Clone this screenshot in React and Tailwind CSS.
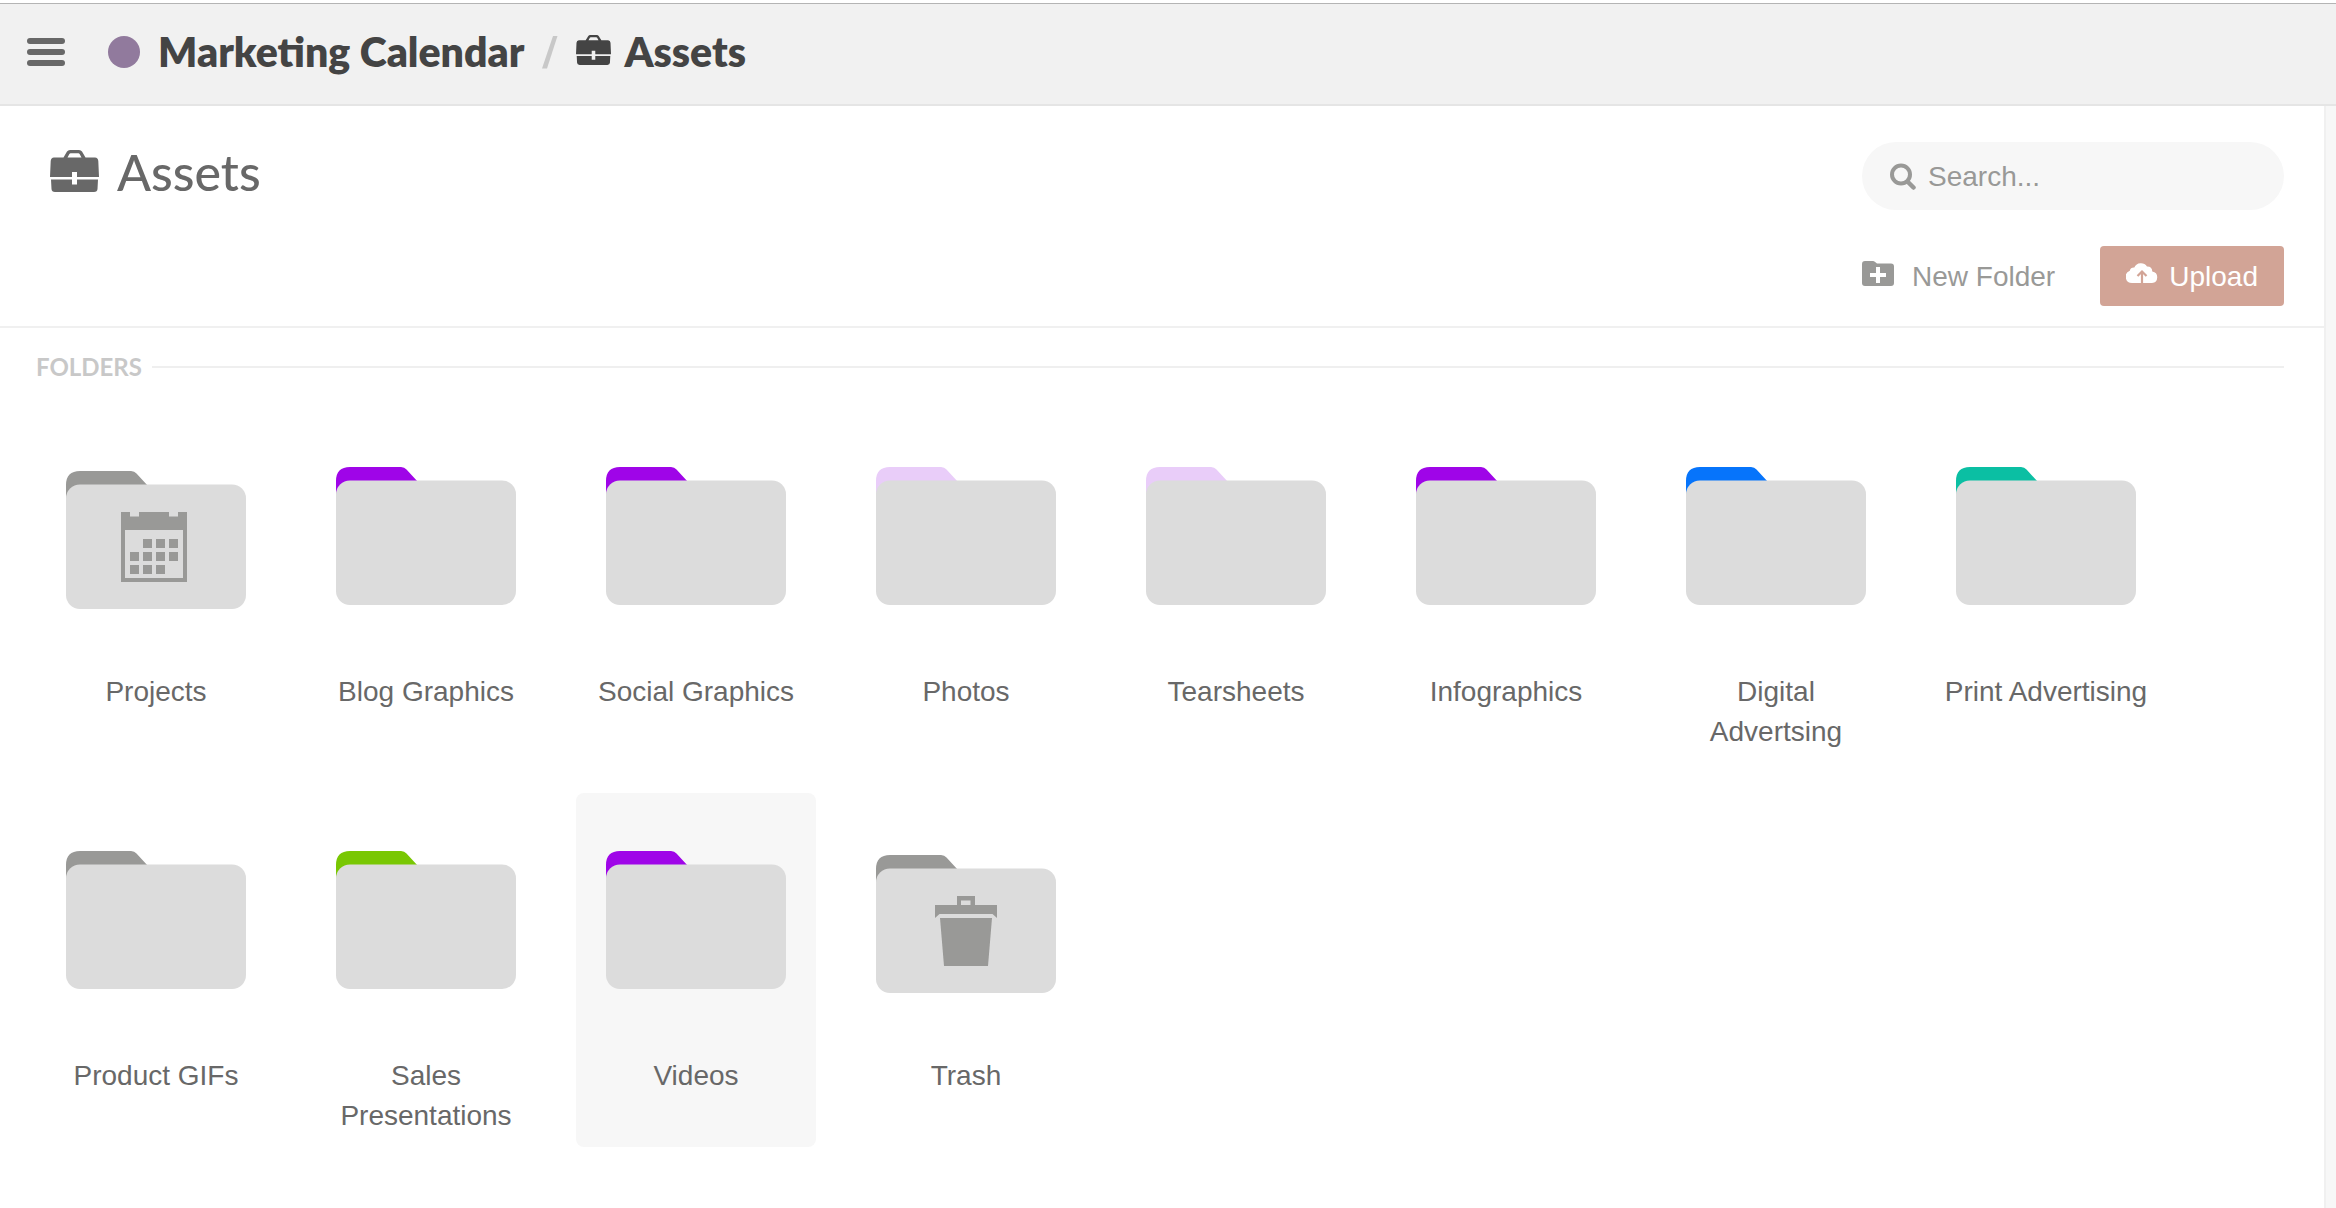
const GREY = "#999997";

const folders = [
  { name: "Projects", color: GREY, glyph: "calendar" },
  { name: "Blog Graphics", color: "#9f05e8" },
  { name: "Social Graphics", color: "#9f05e8" },
  { name: "Photos", color: "#e9cdf9" },
  { name: "Tearsheets", color: "#e9cdf9" },
  { name: "Infographics", color: "#9f05e8" },
  { name: "Digital Advertsing", color: "#0674fb" },
  { name: "Print Advertising", color: "#0bbfa3" },
  { name: "Product GIFs", color: GREY },
  { name: "Sales Presentations", color: "#79c703" },
  { name: "Videos", color: "#9f05e8", active: true },
  { name: "Trash", color: GREY, glyph: "trash" },
];

function Briefcase({ className }) {
  return (
    <svg viewBox="0 0 49 42" className={className} fill="currentColor" aria-hidden="true">
      <path
        fillRule="evenodd"
        d="M13.500 7.500 17 1.600Q18 0 20 0H29Q31 0 32 1.600L35.500 7.500H45Q48 7.500 48.300 11L49 27H27V22H22V27H0L.7 11Q1 7.500 4 7.500ZM17.500 7.500H31.500L29.600 4Q29.200 3.200 28.400 3.200H20.600Q19.800 3.200 19.400 4Z"
      />
      <path d="M1 29.500H22V34.500H27V29.500H48L47.500 39Q47.300 42 44 42H5Q1.700 42 1.500 39Z" />
    </svg>
  );
}

function CalendarGlyph() {
  const cells = [
    [22, 27], [35, 27], [48, 27],
    [9, 40], [22, 40], [35, 40], [48, 40],
    [9, 53], [22, 53], [35, 53],
  ];
  return (
    <g transform="translate(55 49)" fill={GREY}>
      <path fillRule="evenodd" d="M0 0H9V4.500H18V0H48V4.500H57V0H66V70H0ZM4 18V66H62V18Z" />
      {cells.map(([x, y]) => (
        <rect key={`${x}-${y}`} x={x} y={y} width="9" height="9" />
      ))}
    </g>
  );
}

function TrashGlyph() {
  return (
    <g transform="translate(59 49)" fill={GREY}>
      <path fillRule="evenodd" d="M22 0H40V9H62V22L57.500 18H4.500L0 22V9H22ZM26 4.500V9H35.500V4.500Z" />
      <path d="M5 22H57L53 70H9Z" />
    </g>
  );
}

function Folder({ color, glyph }) {
  return (
    <svg
      viewBox={glyph ? "0 0 180 146" : "0 8 180 138"}
      className={glyph ? "h-[146px] w-[180px]" : "h-[138px] w-[180px]"}
      aria-hidden="true"
    >
      <path d="M0 40V22Q0 8 14 8H65Q68.500 8 70.500 10.500L82 23V40Z" fill={color} />
      <rect y="21.500" width="180" height="124.500" rx="14" fill="#dcdcdc" />
      {glyph === "calendar" && <CalendarGlyph />}
      {glyph === "trash" && <TrashGlyph />}
    </svg>
  );
}

function Tile({ name, color, glyph, active }) {
  return (
    <li className="flex">
      <button
        type="button"
        className={`flex min-h-[354px] w-60 flex-col items-center rounded-lg px-3 pb-2 ${active ? "bg-[#f7f7f7]" : ""}`}
      >
        <span className="flex h-[254px] items-center">
          <Folder color={color} glyph={glyph} />
        </span>
        <span className="mt-[9px] text-center text-[28px] leading-10 text-[#686868]">{name}</span>
      </button>
    </li>
  );
}

export default function App() {
  return (
    <div className="flex min-h-screen flex-col bg-white pt-[3px] font-['Liberation_Sans',Arial,sans-serif]">
      <header className="flex h-[103px] items-center border-t border-b-2 border-t-[#b4b4b4] border-b-[#e5e5e5] bg-[#f1f1f1] pb-1 pl-[27px] font-['Lato',sans-serif] text-[41px] leading-[48px] font-extrabold text-[#444444]">
        <button type="button" aria-label="Menu" className="flex w-[38px] flex-col gap-[5px]">
          <span className="h-[6px] rounded-full bg-[#686868]" />
          <span className="h-[6px] rounded-full bg-[#686868]" />
          <span className="h-[6px] rounded-full bg-[#686868]" />
        </button>
        <nav aria-label="Breadcrumb" className="ml-[43px] flex items-center">
          <span className="size-8 rounded-full bg-[#917a9d]" />
          <a href="#calendar" className="ml-[18px]">Marketing Calendar</a>
          <svg viewBox="0 0 16 34" className="mx-[18px] h-[34px] w-4" aria-hidden="true">
            <path d="M11 1H15.500L5 33.500H0Z" fill="#c8c8c8" />
          </svg>
          <a href="#assets" className="flex items-center gap-[13px]">
            <Briefcase className="mb-1 h-[30px] w-[35px]" />
            Assets
          </a>
        </nav>
      </header>

      <div className="flex flex-1">
        <main className="flex-1">
          <section className="flex items-start justify-between border-b-2 border-[#f0f0f0] pt-9 pr-10 pb-5 pl-[50px]">
            <h1 className="flex items-center gap-[18px] font-['Lato',sans-serif] text-[50px] leading-[60px] font-medium text-[#686868]">
              <Briefcase className="mb-[2px] h-[42px] w-[49px]" />
              Assets
            </h1>
            <div className="flex w-[422px] flex-col gap-9 text-[28px] leading-8 text-[#999997]">
              <label className="flex h-[68px] items-center gap-3 rounded-full bg-[#f7f7f7] px-7">
                <svg viewBox="0 0 26 27" className="h-[27px] w-[26px] shrink-0" fill="none" stroke="currentColor" strokeLinecap="round" aria-hidden="true">
                  <circle cx="11" cy="11.500" r="9" strokeWidth="4" />
                  <path d="M18 19 23.500 24.500" strokeWidth="4.500" />
                </svg>
                <input
                  type="search"
                  aria-label="Search"
                  placeholder="Search..."
                  className="w-full min-w-0 bg-transparent pt-[2px] outline-none placeholder:text-[#999997]"
                />
              </label>
              <div className="flex h-[60px] items-center justify-between">
                <button type="button" className="flex items-center gap-[18px] pt-[2px]">
                  <svg viewBox="0 0 32 25" className="mb-2 h-[25px] w-8" fill="currentColor" aria-hidden="true">
                    <path
                      fillRule="evenodd"
                      d="M3 0H11Q12 0 12.800 .8L15 2.500H29Q32 2.500 32 5.500V22Q32 25 29 25H3Q0 25 0 22V3Q0 0 3 0ZM14 6V12H8V16H14V22H18V16H24V12H18V6Z"
                    />
                  </svg>
                  New Folder
                </button>
                <button type="button" className="flex h-full items-center gap-[11px] rounded-[4px] bg-[#d2a496] px-[26px] pt-[2px] text-white">
                  <svg viewBox="0 0 32 20" className="mb-2 h-5 w-8" aria-hidden="true">
                    <path
                      fill="currentColor"
                      d="M6 20A6.300 6.300 0 0 1 3.800 7.800Q4.500 4.300 8.300 4.500A7.300 7.300 0 0 1 21 3.600Q26 3.400 26.300 8.500A5.800 5.800 0 0 1 26 20Z"
                    />
                    <path d="M16 20V8.500M11.500 13 16 8.500 20.500 13" fill="none" stroke="#d2a496" strokeWidth="2.200" />
                  </svg>
                  Upload
                </button>
              </div>
            </div>
          </section>

          <section className="pr-10 pl-9">
            <h2 className="flex items-center gap-[10px] pt-[23px] font-['Lato',sans-serif] text-[24px] leading-8 font-bold text-[#c8c8c8] after:h-[2px] after:flex-1 after:bg-[#efefef]">
              FOLDERS
            </h2>
            <ul className="mt-[26px] flex flex-wrap gap-[30px]">
              {folders.map((folder) => (
                <Tile key={folder.name} {...folder} />
              ))}
            </ul>
          </section>
        </main>
        <aside className="w-3 border-l-2 border-[#f0f0f0] bg-[#f7f7f7]" />
      </div>
    </div>
  );
}
